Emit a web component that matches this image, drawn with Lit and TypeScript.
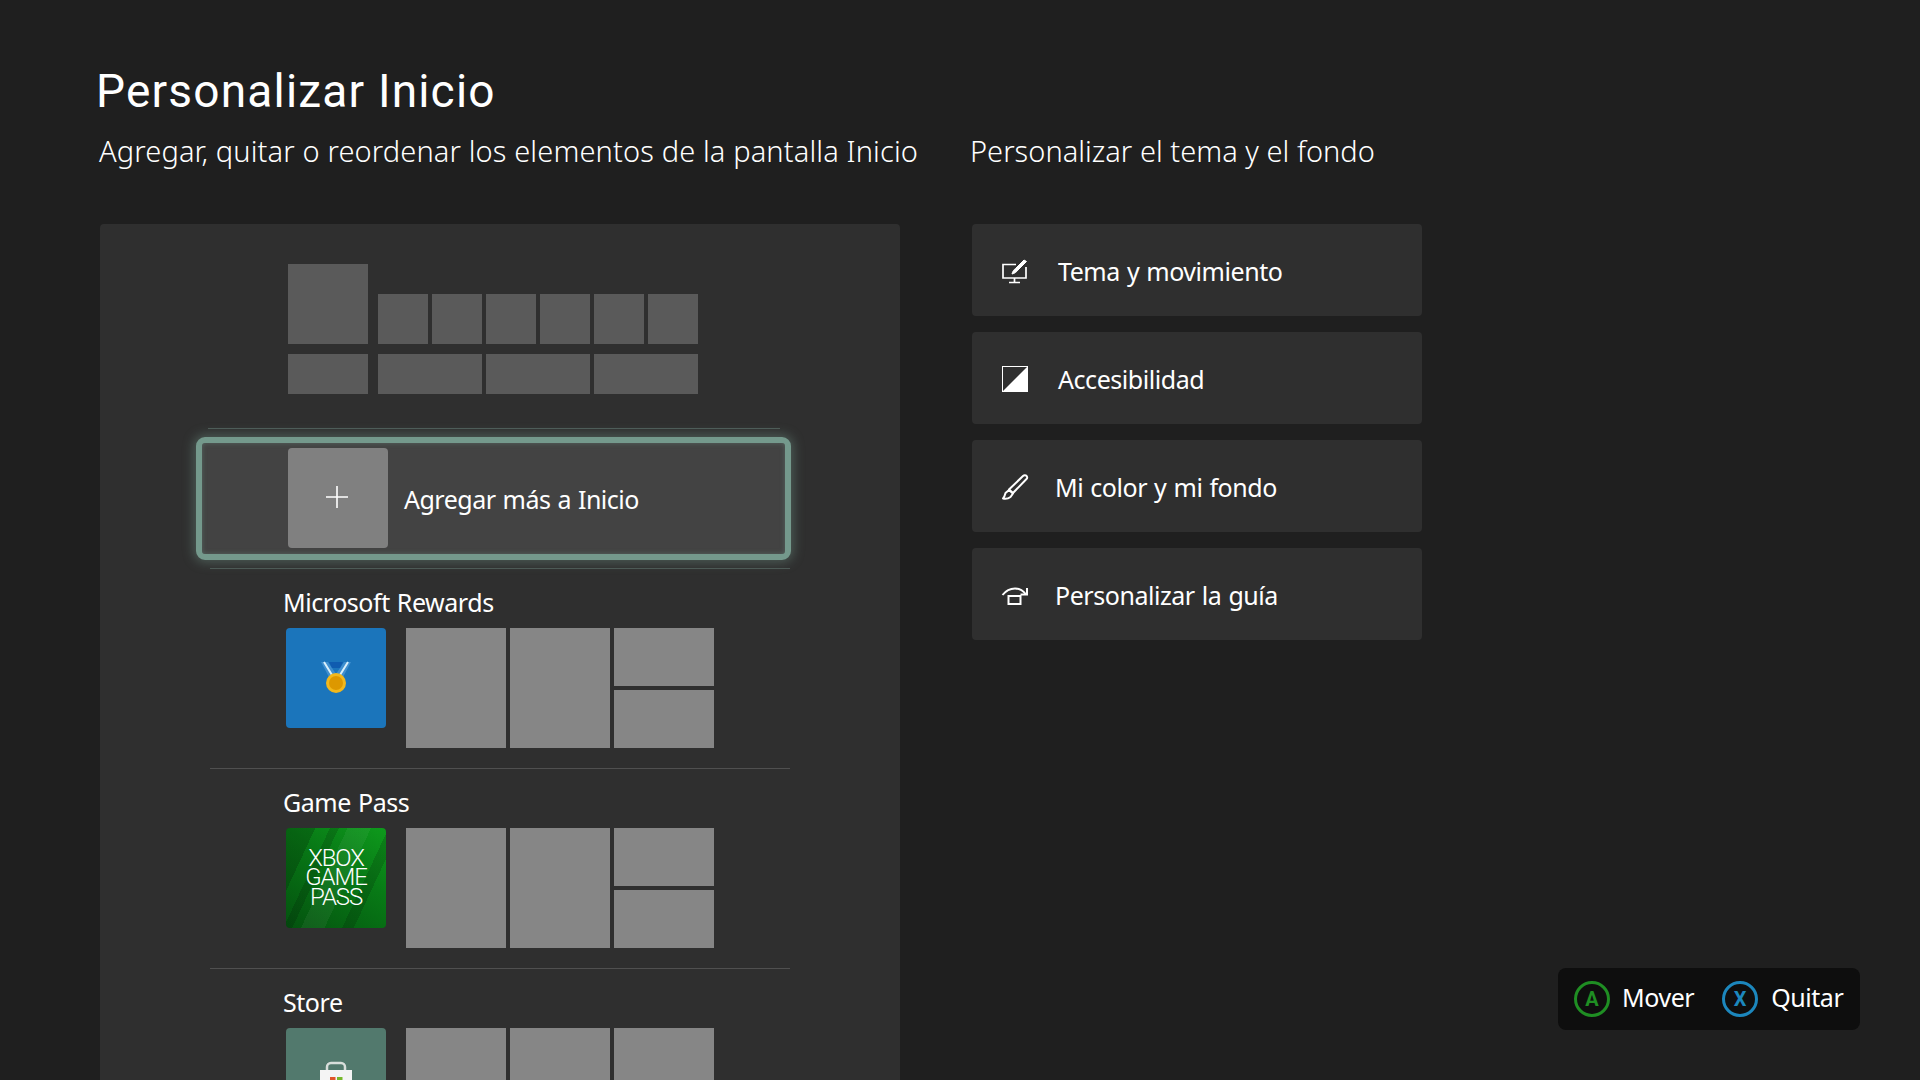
import { LitElement, html, css } from "lit";
import { customElement } from "lit/decorators.js";

@customElement("app-root")
export class AppRoot extends LitElement {
  static styles = css`
    :host { display: block; width: 1920px; height: 1080px; overflow: hidden; background: #1f1f1f; color: #fff; font-family: "Noto Sans", "Open Sans", sans-serif; }
    .page { display: flex; flex-direction: column; height: 1080px; position: relative; }
    h1 { margin: 0; padding: 64px 0 0 96px; font: 400 46px/54px "Roboto", sans-serif; letter-spacing: 1.2px; height: 54px; white-space: nowrap; }
    .heads { display: flex; padding: 14px 0 0 99px; height: 38px; font-size: 29px; line-height: 38px; font-weight: 300; letter-spacing: 0.13px; }
    .heads .a { width: 871px; white-space: nowrap; }
    .heads .b { letter-spacing: 0.03px; }
    .cols { display: flex; margin-top: 54px; padding-left: 100px; gap: 72px; align-items: flex-start; }
    .panel { width: 800px; height: 856px; background: #2f2f2f; border-radius: 4px 4px 0 0; overflow: hidden; padding-top: 70px; box-sizing: border-box; flex: none; }
    .top { margin-left: 188px; display: grid; grid-template-columns: 86px 50px 50px 50px 50px 50px 50px; grid-template-rows: 50px 40px; column-gap: 4px; row-gap: 10px; width: 410px; }
    .top div { background: #5a5a5a; }
    .top .big { margin-top: -30px; height: 80px; width: 80px; }
    .top .s1 { width: 80px; }
    .top .w { grid-column: span 2; }
    .line1 { margin: 34px 0 0 108px; width: 572px; height: 1px; background: #4d5a56; }
    .add { margin: 8px 0 0 96px; width: 595px; height: 123px; box-sizing: border-box; border: 6px solid #74998c; border-radius: 9px; background: #434343; box-shadow: 0 0 12px 2px rgba(116,153,140,.45), inset 0 0 5px rgba(116,153,140,.4); padding: 5px 0 0 86px; display: flex; gap: 16px; }
    .plus { width: 100px; height: 100px; background: #808080; border-radius: 4px; display: flex; align-items: center; justify-content: center; }
    .plus svg { margin: -3px 2px 0 0; }
    .add span, .label, .card span, .hints { font-size: 25px; letter-spacing: -0.45px; word-spacing: 1px; }
    .add span { line-height: 36px; margin-top: 33px; letter-spacing: -0.5px; }
    .sep { margin: 8px 0 0 110px; width: 580px; height: 1px; background: #4d5a56; }
    .section { height: 199px; box-sizing: border-box; padding: 16px 0 0 182px; }
    .sep2 { height: 1px; width: 580px; margin-left: 110px; background: #505050; }
    .label { line-height: 34px; height: 34px; margin-left: 1px; margin-bottom: 9px; white-space: nowrap; }
    .row { display: flex; margin-left: 4px; gap: 20px; align-items: flex-start; }
    .tile { width: 100px; height: 100px; border-radius: 4px; flex: none; display: flex; align-items: center; justify-content: center; overflow: hidden; }
    .rewards { background: #1b75bb; }
    .pass { background: linear-gradient(115deg, transparent 42%, rgba(255,255,255,.05) 42% 58%, transparent 58%), linear-gradient(115deg, rgba(0,0,0,.18) 20%, transparent 20% 30%, rgba(0,0,0,.15) 30% 36%, transparent 36% 70%, rgba(0,0,0,.15) 70% 78%, transparent 78%), linear-gradient(35deg, #04520f, #087a16 60%, #0e9a1c); flex-direction: column; }
    .pass span { font: 300 24px/19.5px "Roboto", sans-serif; letter-spacing: -1.1px; text-align: center; display: block; width: 100%; }
    .store { background: #52796d; }
    .grays { display: grid; grid-template-columns: 100px 100px 100px; grid-template-rows: 58px 58px; gap: 4px; }
    .grays div { background: #868686; }
    .grays .t { grid-row: span 2; }
    .cards { display: flex; flex-direction: column; gap: 16px; width: 450px; }
    .card { height: 92px; background: #2f2f2f; border-radius: 4px; display: flex; align-items: center; padding-left: 29px; box-sizing: border-box; }
    .card svg { width: 28px; height: 28px; flex: none; }
    .card span { line-height: 36px; margin-left: 29px; margin-top: 2px; white-space: nowrap; }
    .card.n span { margin-left: 26px; }
    .hints { position: absolute; left: 1558px; top: 968px; width: 302px; height: 62px; background: #0e0e0e; border-radius: 8px; display: flex; align-items: center; padding-left: 16px; box-sizing: border-box; }
    .circle { width: 36px; height: 36px; border-radius: 50%; box-sizing: border-box; border: 3px solid; display: flex; align-items: center; justify-content: center; font: 700 20px/1 "Roboto", sans-serif; letter-spacing: 0; word-spacing: 0; flex: none; }
    .circle.a { border-color: #1f8e23; color: #1f8e23; }
    .circle.x { border-color: #1c87bd; color: #1c87bd; margin-left: 28px; }
    .hints span { margin-left: 12px; line-height: 36px; margin-top: -4px; }
    .hints .q { margin-left: 13px; }
  `;

  private section(name: string, tile: unknown, klass: string) {
    return html`<div class="section">
      <div class="label">${name}</div>
      <div class="row">
        <div class="tile ${klass}">${tile}</div>
        <div class="grays"><div class="t"></div><div class="t"></div><div></div><div></div></div>
      </div>
    </div>`;
  }

  render() {
    const medal = html`<svg width="100" height="100" viewBox="0 0 100 100">
      <path d="M35 34h7l8 12-6 5zM65 34h-7l-8 12 6 5z" fill="#3f8fcf"/>
      <path d="M43 34h14l-3 6H46z" fill="#0f5cb0"/>
      <path d="M38 34l8 13M62 34l-8 13" stroke="#d8f0fb" stroke-width="2" fill="none"/>
      <circle cx="50" cy="55" r="10" fill="#f2b81c"/><circle cx="50" cy="55" r="7" fill="#dd9800"/>
    </svg>`;
    const pass = html`<span>XBOX</span><span>GAME</span><span>PASS</span>`;
    const bag = html`<svg width="100" height="100" viewBox="0 0 100 100">
      <path d="M41 43v-4a4 4 0 0 1 4-4h10a4 4 0 0 1 4 4v4" stroke="#d8dedb" stroke-width="2.5" fill="none"/>
      <rect x="34" y="42" width="32" height="40" fill="#f4f4f4"/>
      <rect x="44" y="49" width="5.500" height="5.500" fill="#e0552a"/><rect x="51" y="49" width="5.500" height="5.500" fill="#76b82a"/>
    </svg>`;
    return html`<div class="page">
      <h1>Personalizar Inicio</h1>
      <div class="heads"><div class="a">Agregar, quitar o reordenar los elementos de la pantalla Inicio</div><div class="b">Personalizar el tema y el fondo</div></div>
      <div class="cols">
        <div class="panel">
          <div class="top">
            <div class="big"></div><div></div><div></div><div></div><div></div><div></div><div></div>
            <div class="s1"></div><div class="w"></div><div class="w"></div><div class="w"></div>
          </div>
          <div class="line1"></div>
          <div class="add">
            <div class="plus"><svg width="24" height="24" viewBox="0 0 24 24"><path d="M12 1v22M1 12h22" stroke="#fff" stroke-width="1.6"/></svg></div>
            <span>Agregar más a Inicio</span>
          </div>
          <div class="sep"></div>
          ${this.section("Microsoft Rewards", medal, "rewards")}
          <div class="sep2"></div>
          ${this.section("Game Pass", pass, "pass")}
          <div class="sep2"></div>
          ${this.section("Store", bag, "store")}
        </div>
        <div class="cards">
          <div class="card"><svg viewBox="0 0 28 28" fill="none" stroke="#fff" stroke-width="1.700"><path d="M15 8.500H2v13.500h23V11M13.500 22v4M8 26.500h11"/><path d="M25.500 5.500L17 14c-1.500 2-3.500 3.500-6 4 .5-2.500 2-4.500 3.500-5.500L23 4z" fill="#fff" stroke-width="1"/></svg><span>Tema y movimiento</span></div>
          <div class="card"><svg viewBox="0 -2 28 28"><rect x="1" y="0" width="26" height="26" fill="#fff"/><path d="M2 1h24L2 25z" fill="#2f2f2f"/></svg><span>Accesibilidad</span></div>
          <div class="card n"><svg viewBox="0 -2 28 28" fill="none" stroke="#fff" stroke-width="2" stroke-linejoin="round"><path d="M25 1.500c1.500 1 1.500 2.500.5 3.500L12 19l-4-3.500L22 2c1-1 2-1 3-.5z"/><path d="M8 16l4 3.500-2.500 3.500c-2 1.500-5 2-7.500 1.500 1.500-1.500 2-3.500 2.500-5.500z"/></svg><span>Mi color y mi fondo</span></div>
          <div class="card n"><svg viewBox="0 0 28 28" fill="none" stroke="#fff" stroke-width="2"><path d="M1.500 15C5 10.500 9 8.500 14 8.500c4.500 0 8 2 11 6"/><path d="M26 8v6.500h-6.500"/><rect x="7.500" y="16" width="12" height="8"/></svg><span>Personalizar la guía</span></div>
        </div>
      </div>
      <div class="hints"><div class="circle a">A</div><span>Mover</span><div class="circle x">X</div><span class="q">Quitar</span></div>
    </div>`;
  }
}
